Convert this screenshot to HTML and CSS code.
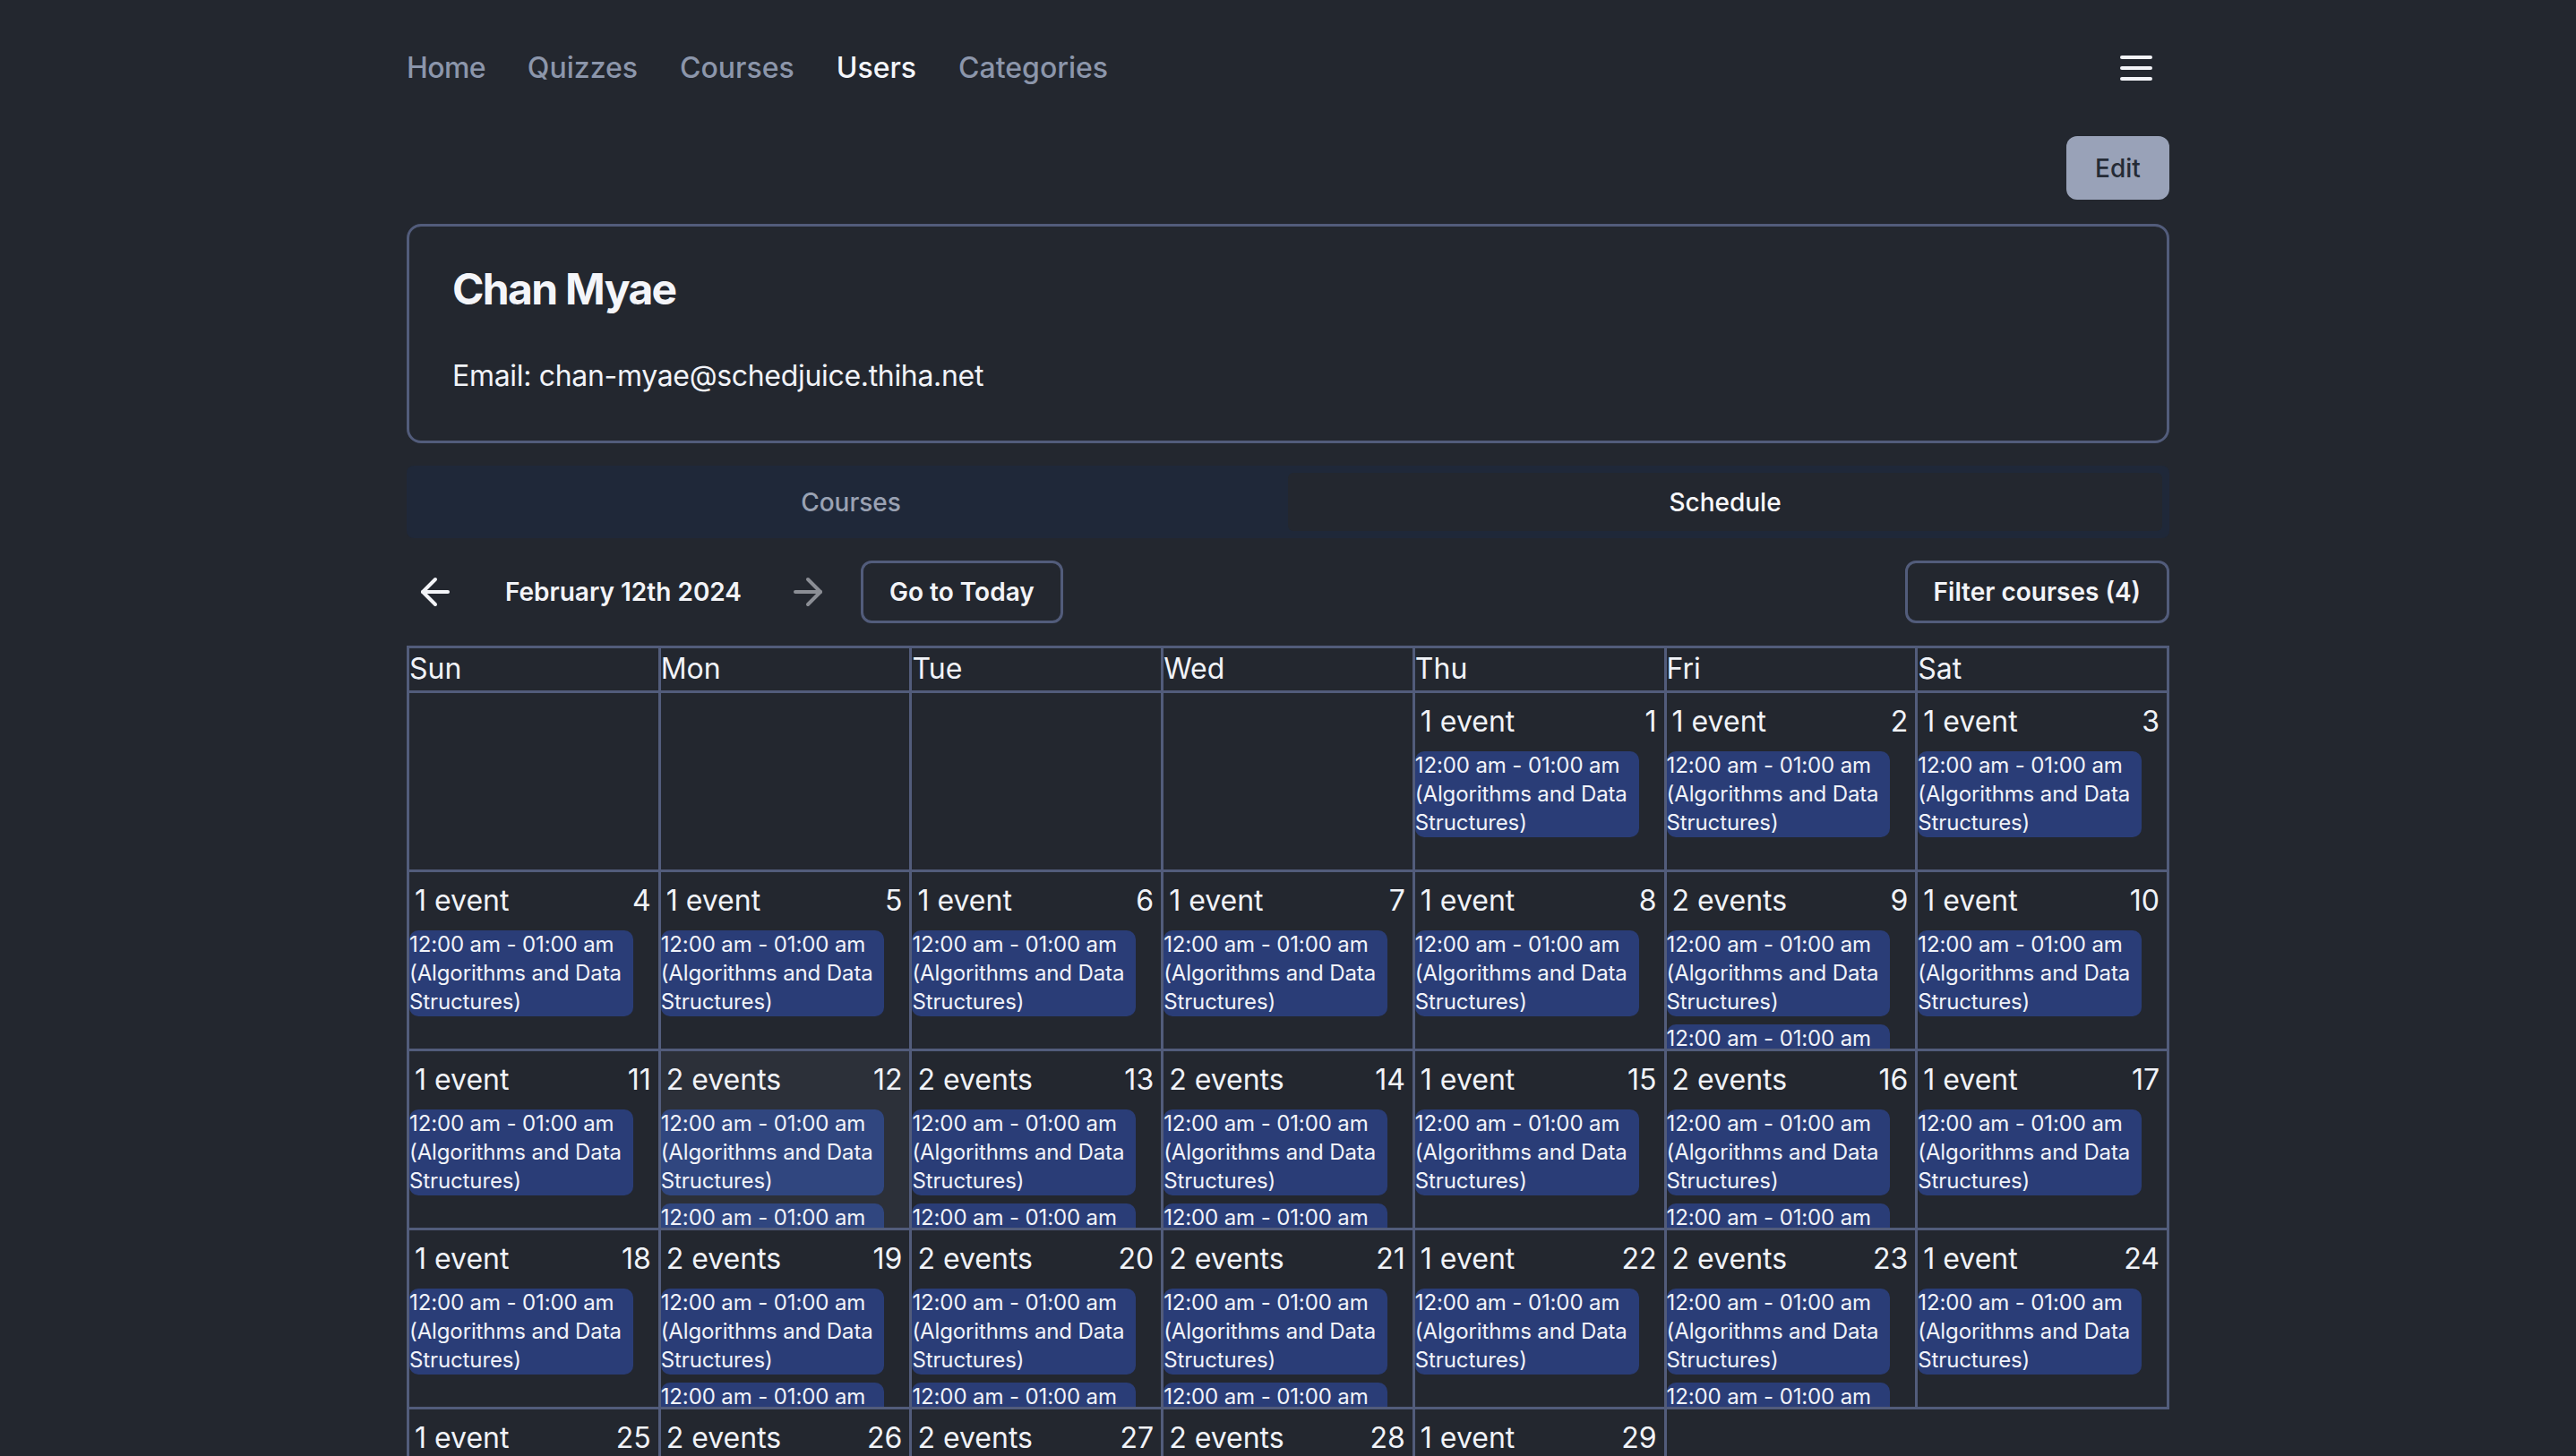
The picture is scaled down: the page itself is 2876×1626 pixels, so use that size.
FILE: index.html
```html
<!DOCTYPE html>
<html lang="en">
<head>
<meta charset="utf-8">
<title>Chan Myae</title>
<link rel="stylesheet" href="styles.css">
</head>
<body>
<div class="page">
  <header class="topbar">
    <nav class="nav">
      <a href="#">Home</a>
      <a href="#">Quizzes</a>
      <a href="#">Courses</a>
      <a href="#" class="active">Users</a>
      <a href="#">Categories</a>
    </nav>
    <button class="menu-btn" aria-label="Menu">
      <svg width="48" height="48" viewBox="0 0 24 24" fill="none" stroke="#f3f4f8" stroke-width="2" stroke-linecap="round"><line x1="4" y1="6" x2="20" y2="6"/><line x1="4" y1="12" x2="20" y2="12"/><line x1="4" y1="18" x2="20" y2="18"/></svg>
    </button>
  </header>

  <div class="edit-row"><button class="edit-btn">Edit</button></div>

  <section class="card">
    <h1>Chan Myae</h1>
    <p>Email: chan-myae@schedjuice.thiha.net</p>
  </section>

  <div class="tabs">
    <div class="tab">Courses</div>
    <div class="tab active">Schedule</div>
  </div>

  <div class="controls">
    <button class="arrow-btn prev" aria-label="Previous">
      <svg width="48" height="48" viewBox="0 0 24 24" fill="none" stroke="currentColor" stroke-width="2" stroke-linecap="round" stroke-linejoin="round"><path d="m12 19-7-7 7-7"/><path d="M19 12H5"/></svg>
    </button>
    <span class="date">February 12th 2024</span>
    <button class="arrow-btn next" aria-label="Next">
      <svg width="48" height="48" viewBox="0 0 24 24" fill="none" stroke="currentColor" stroke-width="2" stroke-linecap="round" stroke-linejoin="round"><path d="M5 12h14"/><path d="m12 5 7 7-7 7"/></svg>
    </button>
    <button class="outline-btn today">Go to Today</button>
    <button class="outline-btn filter">Filter courses (4)</button>
  </div>

  <div class="cal">
    <div class="dow">Sun</div><div class="dow">Mon</div><div class="dow">Tue</div><div class="dow">Wed</div><div class="dow">Thu</div><div class="dow">Fri</div><div class="dow">Sat</div>

    <div class="cell"></div><div class="cell"></div><div class="cell"></div><div class="cell"></div>
    <div class="cell"><div class="cell-head"><span>1 event</span><span>1</span></div><div class="chips"><div class="chip">12:00 am - 01:00 am (Algorithms and Data Structures)</div></div></div>
    <div class="cell"><div class="cell-head"><span>1 event</span><span>2</span></div><div class="chips"><div class="chip">12:00 am - 01:00 am (Algorithms and Data Structures)</div></div></div>
    <div class="cell"><div class="cell-head"><span>1 event</span><span>3</span></div><div class="chips"><div class="chip">12:00 am - 01:00 am (Algorithms and Data Structures)</div></div></div>

    <div class="cell"><div class="cell-head"><span>1 event</span><span>4</span></div><div class="chips"><div class="chip">12:00 am - 01:00 am (Algorithms and Data Structures)</div></div></div>
    <div class="cell"><div class="cell-head"><span>1 event</span><span>5</span></div><div class="chips"><div class="chip">12:00 am - 01:00 am (Algorithms and Data Structures)</div></div></div>
    <div class="cell"><div class="cell-head"><span>1 event</span><span>6</span></div><div class="chips"><div class="chip">12:00 am - 01:00 am (Algorithms and Data Structures)</div></div></div>
    <div class="cell"><div class="cell-head"><span>1 event</span><span>7</span></div><div class="chips"><div class="chip">12:00 am - 01:00 am (Algorithms and Data Structures)</div></div></div>
    <div class="cell"><div class="cell-head"><span>1 event</span><span>8</span></div><div class="chips"><div class="chip">12:00 am - 01:00 am (Algorithms and Data Structures)</div></div></div>
    <div class="cell"><div class="cell-head"><span>2 events</span><span>9</span></div><div class="chips"><div class="chip">12:00 am - 01:00 am (Algorithms and Data Structures)</div><div class="chip">12:00 am - 01:00 am (Algorithms and Data Structures)</div></div></div>
    <div class="cell"><div class="cell-head"><span>1 event</span><span>10</span></div><div class="chips"><div class="chip">12:00 am - 01:00 am (Algorithms and Data Structures)</div></div></div>

    <div class="cell"><div class="cell-head"><span>1 event</span><span>11</span></div><div class="chips"><div class="chip">12:00 am - 01:00 am (Algorithms and Data Structures)</div></div></div>
    <div class="cell today"><div class="cell-head"><span>2 events</span><span>12</span></div><div class="chips"><div class="chip">12:00 am - 01:00 am (Algorithms and Data Structures)</div><div class="chip">12:00 am - 01:00 am (Algorithms and Data Structures)</div></div></div>
    <div class="cell"><div class="cell-head"><span>2 events</span><span>13</span></div><div class="chips"><div class="chip">12:00 am - 01:00 am (Algorithms and Data Structures)</div><div class="chip">12:00 am - 01:00 am (Algorithms and Data Structures)</div></div></div>
    <div class="cell"><div class="cell-head"><span>2 events</span><span>14</span></div><div class="chips"><div class="chip">12:00 am - 01:00 am (Algorithms and Data Structures)</div><div class="chip">12:00 am - 01:00 am (Algorithms and Data Structures)</div></div></div>
    <div class="cell"><div class="cell-head"><span>1 event</span><span>15</span></div><div class="chips"><div class="chip">12:00 am - 01:00 am (Algorithms and Data Structures)</div></div></div>
    <div class="cell"><div class="cell-head"><span>2 events</span><span>16</span></div><div class="chips"><div class="chip">12:00 am - 01:00 am (Algorithms and Data Structures)</div><div class="chip">12:00 am - 01:00 am (Algorithms and Data Structures)</div></div></div>
    <div class="cell"><div class="cell-head"><span>1 event</span><span>17</span></div><div class="chips"><div class="chip">12:00 am - 01:00 am (Algorithms and Data Structures)</div></div></div>

    <div class="cell"><div class="cell-head"><span>1 event</span><span>18</span></div><div class="chips"><div class="chip">12:00 am - 01:00 am (Algorithms and Data Structures)</div></div></div>
    <div class="cell"><div class="cell-head"><span>2 events</span><span>19</span></div><div class="chips"><div class="chip">12:00 am - 01:00 am (Algorithms and Data Structures)</div><div class="chip">12:00 am - 01:00 am (Algorithms and Data Structures)</div></div></div>
    <div class="cell"><div class="cell-head"><span>2 events</span><span>20</span></div><div class="chips"><div class="chip">12:00 am - 01:00 am (Algorithms and Data Structures)</div><div class="chip">12:00 am - 01:00 am (Algorithms and Data Structures)</div></div></div>
    <div class="cell"><div class="cell-head"><span>2 events</span><span>21</span></div><div class="chips"><div class="chip">12:00 am - 01:00 am (Algorithms and Data Structures)</div><div class="chip">12:00 am - 01:00 am (Algorithms and Data Structures)</div></div></div>
    <div class="cell"><div class="cell-head"><span>1 event</span><span>22</span></div><div class="chips"><div class="chip">12:00 am - 01:00 am (Algorithms and Data Structures)</div></div></div>
    <div class="cell"><div class="cell-head"><span>2 events</span><span>23</span></div><div class="chips"><div class="chip">12:00 am - 01:00 am (Algorithms and Data Structures)</div><div class="chip">12:00 am - 01:00 am (Algorithms and Data Structures)</div></div></div>
    <div class="cell"><div class="cell-head"><span>1 event</span><span>24</span></div><div class="chips"><div class="chip">12:00 am - 01:00 am (Algorithms and Data Structures)</div></div></div>

    <div class="cell"><div class="cell-head"><span>1 event</span><span>25</span></div><div class="chips"><div class="chip">12:00 am - 01:00 am (Algorithms and Data Structures)</div></div></div>
    <div class="cell"><div class="cell-head"><span>2 events</span><span>26</span></div><div class="chips"><div class="chip">12:00 am - 01:00 am (Algorithms and Data Structures)</div><div class="chip">12:00 am - 01:00 am (Algorithms and Data Structures)</div></div></div>
    <div class="cell"><div class="cell-head"><span>2 events</span><span>27</span></div><div class="chips"><div class="chip">12:00 am - 01:00 am (Algorithms and Data Structures)</div><div class="chip">12:00 am - 01:00 am (Algorithms and Data Structures)</div></div></div>
    <div class="cell"><div class="cell-head"><span>2 events</span><span>28</span></div><div class="chips"><div class="chip">12:00 am - 01:00 am (Algorithms and Data Structures)</div><div class="chip">12:00 am - 01:00 am (Algorithms and Data Structures)</div></div></div>
    <div class="cell"><div class="cell-head"><span>1 event</span><span>29</span></div><div class="chips"><div class="chip">12:00 am - 01:00 am (Algorithms and Data Structures)</div></div></div>
  </div>
</div>
</body>
</html>
```

FILE: styles.css
```css
* { box-sizing: border-box; }

body {
  margin: 0;
  background: #23272f;
  color: #f1f3f8;
  font-family: Inter, "Noto Sans", "Liberation Sans", sans-serif;
}

button {
  font-family: inherit;
  cursor: pointer;
}

.page {
  width: 1968px;
  margin: 0 auto;
  padding-bottom: 40px;
}

/* top bar */
.topbar {
  height: 152px;
  display: flex;
  align-items: center;
  justify-content: space-between;
}

.nav {
  display: flex;
  gap: 47px;
}

.nav a {
  font-size: 32px;
  line-height: 48px;
  font-weight: 500;
  color: #8c96ab;
  text-decoration: none;
}

.nav a:first-child {
  letter-spacing: -0.02em;
}

.nav a.active {
  color: #f5f6fa;
}

.menu-btn {
  width: 48px;
  height: 48px;
  padding: 0;
  margin-right: 13px;
  background: none;
  border: none;
  display: flex;
}

.edit-row {
  display: flex;
  justify-content: flex-end;
}

.edit-btn {
  width: 115px;
  height: 71px;
  background: #99a2b8;
  color: #252b36;
  border: none;
  border-radius: 12px;
  font-size: 28px;
  font-weight: 500;
}

/* profile card */
.card {
  margin-top: 27px;
  border: 3px solid #525c7b;
  border-radius: 16px;
  padding: 38px 48px 48px;
}

.card h1 {
  margin: 0;
  font-size: 48px;
  line-height: 64px;
  font-weight: 700;
  letter-spacing: -0.035em;
  color: #f4f5f9;
}

.card p {
  margin: 41px 0 0;
  font-size: 32px;
  line-height: 48px;
  letter-spacing: -0.01em;
  color: #f1f3f8;
}

/* tabs */
.tabs {
  margin-top: 25px;
  height: 81px;
  padding: 8px;
  background: #1f2839;
  border-radius: 8px;
  display: grid;
  grid-template-columns: 1fr 1fr;
}

.tab {
  display: flex;
  align-items: center;
  justify-content: center;
  font-size: 28px;
  font-weight: 500;
  color: #9aa2b3;
  border-radius: 6px;
}

.tab.active {
  background: #23272f;
  color: #f7f8fb;
}

/* controls */
.controls {
  margin-top: 25px;
  height: 70px;
  display: flex;
  align-items: center;
}

.arrow-btn {
  width: 48px;
  height: 48px;
  padding: 0;
  border: none;
  background: none;
  display: flex;
}

.arrow-btn.prev {
  margin-left: 8px;
  color: #f3f4f8;
}

.arrow-btn.next {
  margin-left: 50px;
  color: #8b8e95;
}

.date {
  margin-left: 54px;
  font-size: 28px;
  font-weight: 600;
  color: #f3f4f8;
}

.outline-btn {
  height: 70px;
  padding: 0 29px;
  background: none;
  border: 3px solid #525c7b;
  border-radius: 12px;
  color: #f3f4f8;
  font-size: 28px;
  font-weight: 600;
}

.outline-btn.today {
  margin-left: 35px;
}

.outline-btn.filter {
  margin-left: auto;
}

/* calendar */
.cal {
  margin-top: 25px;
  display: grid;
  grid-template-columns: repeat(7, 1fr);
  border-top: 3px solid #525c7b;
  border-left: 3px solid #525c7b;
}

.dow {
  height: 50px;
  padding-left: 0;
  font-size: 32px;
  line-height: 46px;
  color: #f1f3f8;
  border-right: 3px solid #525c7b;
  border-bottom: 3px solid #525c7b;
}

.cell {
  height: 200px;
  padding-top: 8px;
  overflow: hidden;
  border-right: 3px solid #525c7b;
  border-bottom: 3px solid #525c7b;
}

.cell.today {
  background: #2c3039;
}

.cell-head {
  display: flex;
  justify-content: space-between;
  padding: 0 8px 0 6px;
  font-size: 32px;
  line-height: 48px;
  color: #f1f3f8;
}

.chips {
  margin-top: 9px;
  display: flex;
  flex-direction: column;
  gap: 9px;
}

.chip {
  width: calc(100% - 28px);
  flex-shrink: 0;
  background: #2a3d77;
  color: #f1f3f9;
  border-radius: 10px;
  font-size: 24px;
  line-height: 32px;
  letter-spacing: -0.005em;
}

.cell.today .chip {
  background: #30467f;
}
```
